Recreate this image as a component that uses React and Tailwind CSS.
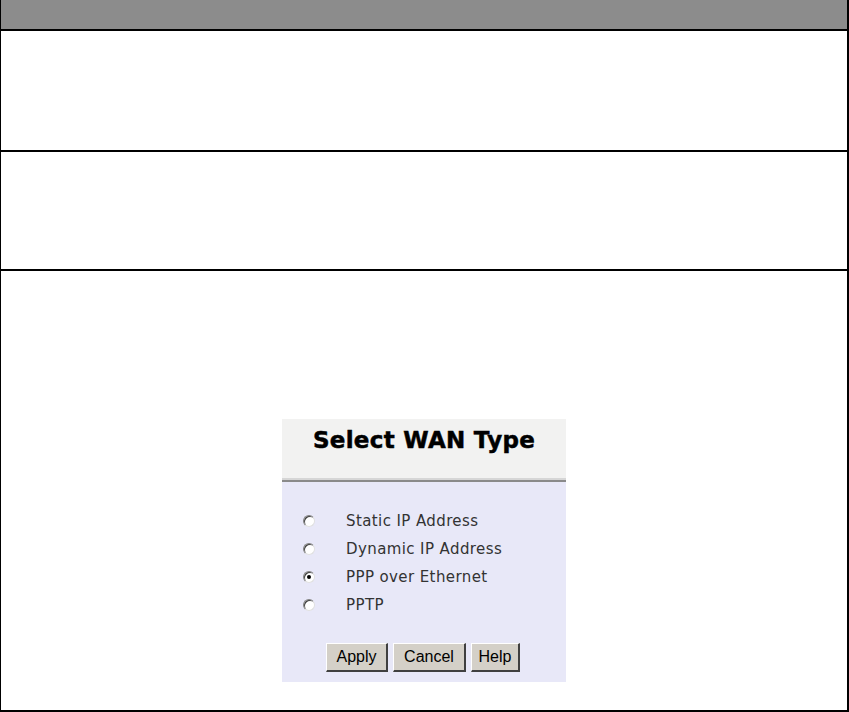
const options = [
  { label: "Static IP Address", checked: false },
  { label: "Dynamic IP Address", checked: false },
  { label: "PPP over Ethernet", checked: true },
  { label: "PPTP", checked: false },
];

function Radio({ checked }) {
  return (
    <span className="relative w-[12px] h-[12px] rounded-full bg-white border border-t-[#808080] border-l-[#808080] border-b-[#e0e0e0] border-r-[#e0e0e0] shadow-[inset_1px_1px_0_#404040] flex items-center justify-center">
      {checked && <span className="w-[4px] h-[4px] rounded-full bg-black" />}
    </span>
  );
}

function WinButton({ children, className }) {
  return (
    <button
      className={
        "h-[29px] bg-[#d4d0c8] text-black text-[16px] border-t border-l border-t-white border-l-white border-b-2 border-r-2 border-b-[#404040] border-r-[#404040] " +
        className
      }
      style={{ fontFamily: '"Liberation Sans", Arial, sans-serif' }}
    >
      {children}
    </button>
  );
}

function SelectWanType() {
  return (
    <div className="w-[284px] h-[263px] flex flex-col bg-[#e8e8f8]">
      <div className="h-[59px] bg-[#f2f2f1] flex items-start justify-center pt-[4px]">
        <span
          className="text-[23px] font-bold text-black tracking-[0.3px] [-webkit-text-stroke:0.5px_black]"
          style={{ fontFamily: '"DejaVu Sans", Verdana, sans-serif' }}
        >
          Select WAN Type
        </span>
      </div>
      <div className="h-[2px] bg-[#d6d6d6]" />
      <div className="h-[2px] bg-[#8a8a8a]" />
      <div
        className="flex flex-col pt-[30px] pl-[21px] gap-[10px]"
        style={{ fontFamily: '"DejaVu Sans", Verdana, sans-serif' }}
      >
        {options.map((o) => (
          <div key={o.label} className="flex items-center h-[18px]">
            <Radio checked={o.checked} />
            <span className="ml-[31px] text-[15px] tracking-[0.4px] text-[#333]">{o.label}</span>
          </div>
        ))}
      </div>
      <div className="flex justify-start pl-[44px] gap-[5px] mt-[29px]">
        <WinButton className="w-[62px]">Apply</WinButton>
        <WinButton className="w-[73px]">Cancel</WinButton>
        <WinButton className="w-[49px]">Help</WinButton>
      </div>
    </div>
  );
}

export default function App() {
  return (
    <div className="w-[849px] h-[712px] bg-white">
      <div className="w-[849px] h-[712px] flex flex-col border-l border-r-2 border-b-2 border-black">
        <div className="h-[31px] bg-[#8c8c8c] border-b-2 border-black" />
        <div className="h-[121px] border-b-2 border-black" />
        <div className="h-[119px] border-b-2 border-black" />
        <div className="flex-1 flex justify-center pt-[148px]">
          <SelectWanType />
        </div>
      </div>
    </div>
  );
}
